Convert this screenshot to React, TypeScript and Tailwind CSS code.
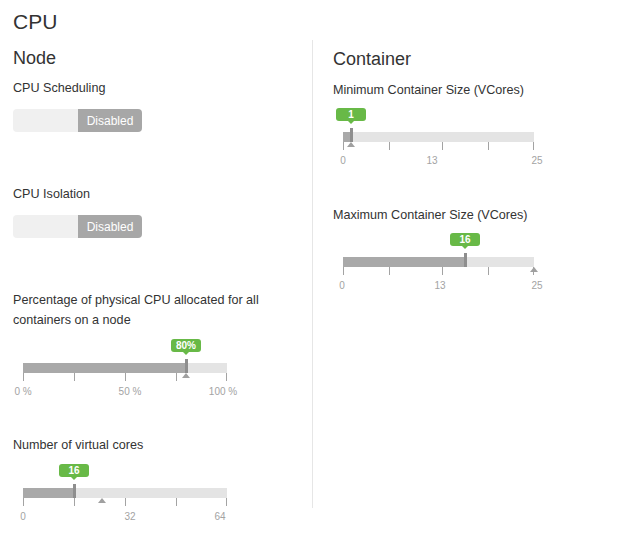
import React from "react";

interface SliderLabel {
  text: string;
  x: number;
}

interface SliderProps {
  width: number;
  widthClass: string;
  value: number;
  marker: number;
  ticks: number[];
  labels: SliderLabel[];
  tip: string;
}

function Slider({ width, widthClass, value, marker, ticks, labels, tip }: SliderProps) {
  const pos = Math.round(value * width);
  const markerPos = Math.round(marker * width);

  return (
    <div className={`relative ml-[10px] h-[60px] ${widthClass}`}>
      {/* Tooltip */}
      <div
        className="absolute top-0 flex h-[13px] w-[30px] items-center justify-center rounded-[3px] bg-[#68b947] text-[10px] font-bold leading-[13px] text-white"
        style={{ left: pos - 15 }}
      >
        {tip}
        <span className="absolute bottom-[-3px] left-[12px] h-0 w-0 border-x-[3px] border-t-[3px] border-x-transparent border-t-[#68b947]" />
      </div>

      {/* Track */}
      <div className="absolute left-0 right-0 top-[24px] h-[10px] bg-[#e4e4e4]">
        <div className="absolute left-0 top-0 h-full bg-[#a9a9a9]" style={{ width: pos }} />
      </div>

      {/* Handle */}
      <div className="absolute top-[20px] h-[14px] w-[3px] bg-[#8e8e8e]" style={{ left: pos - 1 }} />

      {/* Ticks */}
      {ticks.map((t) => (
        <div
          key={t}
          className="absolute top-[34px] h-[8px] w-px bg-[#a3a3a3]"
          style={{ left: Math.round(t * width) - (t === 1 ? 1 : 0) }}
        />
      ))}

      {/* Recommended marker */}
      <div
        className="absolute top-[34px] h-0 w-0 border-x-[4px] border-b-[5px] border-x-transparent border-b-[#a0a0a0]"
        style={{ left: markerPos - 4 }}
      />

      {/* Labels */}
      {labels.map((l) => (
        <span
          key={l.text}
          className="absolute top-[46px] -translate-x-1/2 whitespace-nowrap text-[10px] leading-[14px] text-[#a3a3a3]"
          style={{ left: l.x }}
        >
          {l.text}
        </span>
      ))}
    </div>
  );
}

function Toggle() {
  return (
    <div className="flex h-[23px] w-[129px] overflow-hidden rounded-[4px]">
      <div className="w-[65px] bg-[#f0f0f0]" />
      <div className="flex flex-1 items-center justify-center bg-[#a7a7a7] text-[12px] text-white">
        Disabled
      </div>
    </div>
  );
}

export default function App() {
  const quarter = [0, 0.25, 0.5, 0.75, 1];
  const vcoreTicks = [0, 6 / 25, 13 / 25, 19 / 25, 1];

  return (
    <div className="min-h-screen bg-white pl-[13px] pt-[8px] font-['Liberation_Sans',Arial,sans-serif] text-[#333]">
      <h1 className="h-[32px] text-[21px] leading-[28px]">CPU</h1>

      <div className="flex items-start">
        {/* Node */}
        <div className="w-[299px] pt-[6px]">
          <h2 className="text-[18px] leading-6">Node</h2>

          <div className="mt-2 text-[12.6px] leading-5">CPU Scheduling</div>
          <div className="mt-[11px]">
            <Toggle />
          </div>

          <div className="mt-[52px] text-[12.6px] leading-5">CPU Isolation</div>
          <div className="mt-[11px]">
            <Toggle />
          </div>

          <div className="mt-[52px] w-[280px] text-[12.6px] leading-5">
            Percentage of physical CPU allocated for all containers on a node
          </div>
          <div className="mt-[9px]">
            <Slider
              width={204}
              widthClass="w-[204px]"
              value={0.8}
              marker={0.8}
              ticks={quarter}
              tip="80%"
              labels={[
                { text: "0 %", x: 0 },
                { text: "50 %", x: 107 },
                { text: "100 %", x: 200 },
              ]}
            />
          </div>

          <div className="mt-[36px] text-[12.6px] leading-5">Number of virtual cores</div>
          <div className="mt-[9px]">
            <Slider
              width={204}
              widthClass="w-[204px]"
              value={0.25}
              marker={0.387}
              ticks={quarter}
              tip="16"
              labels={[
                { text: "0", x: 0 },
                { text: "32", x: 107 },
                { text: "64", x: 197 },
              ]}
            />
          </div>
        </div>

        {/* Container */}
        <div className="h-[468px] flex-1 border-l border-[#e6e6e6] pl-5 pt-[7px]">
          <h2 className="text-[18px] leading-6">Container</h2>

          <div className="mt-[9px] text-[12.6px] leading-5">Minimum Container Size (VCores)</div>
          <div className="mt-2">
            <Slider
              width={191}
              widthClass="w-[191px]"
              value={1 / 25}
              marker={1 / 25}
              ticks={vcoreTicks}
              tip="1"
              labels={[
                { text: "0", x: 0 },
                { text: "13", x: 89 },
                { text: "25", x: 194 },
              ]}
            />
          </div>

          <div className="mt-[37px] text-[12.6px] leading-5">Maximum Container Size (VCores)</div>
          <div className="mt-2">
            <Slider
              width={191}
              widthClass="w-[191px]"
              value={16 / 25}
              marker={1}
              ticks={vcoreTicks}
              tip="16"
              labels={[
                { text: "0", x: -1 },
                { text: "13", x: 97 },
                { text: "25", x: 194 },
              ]}
            />
          </div>
        </div>
      </div>
    </div>
  );
}
